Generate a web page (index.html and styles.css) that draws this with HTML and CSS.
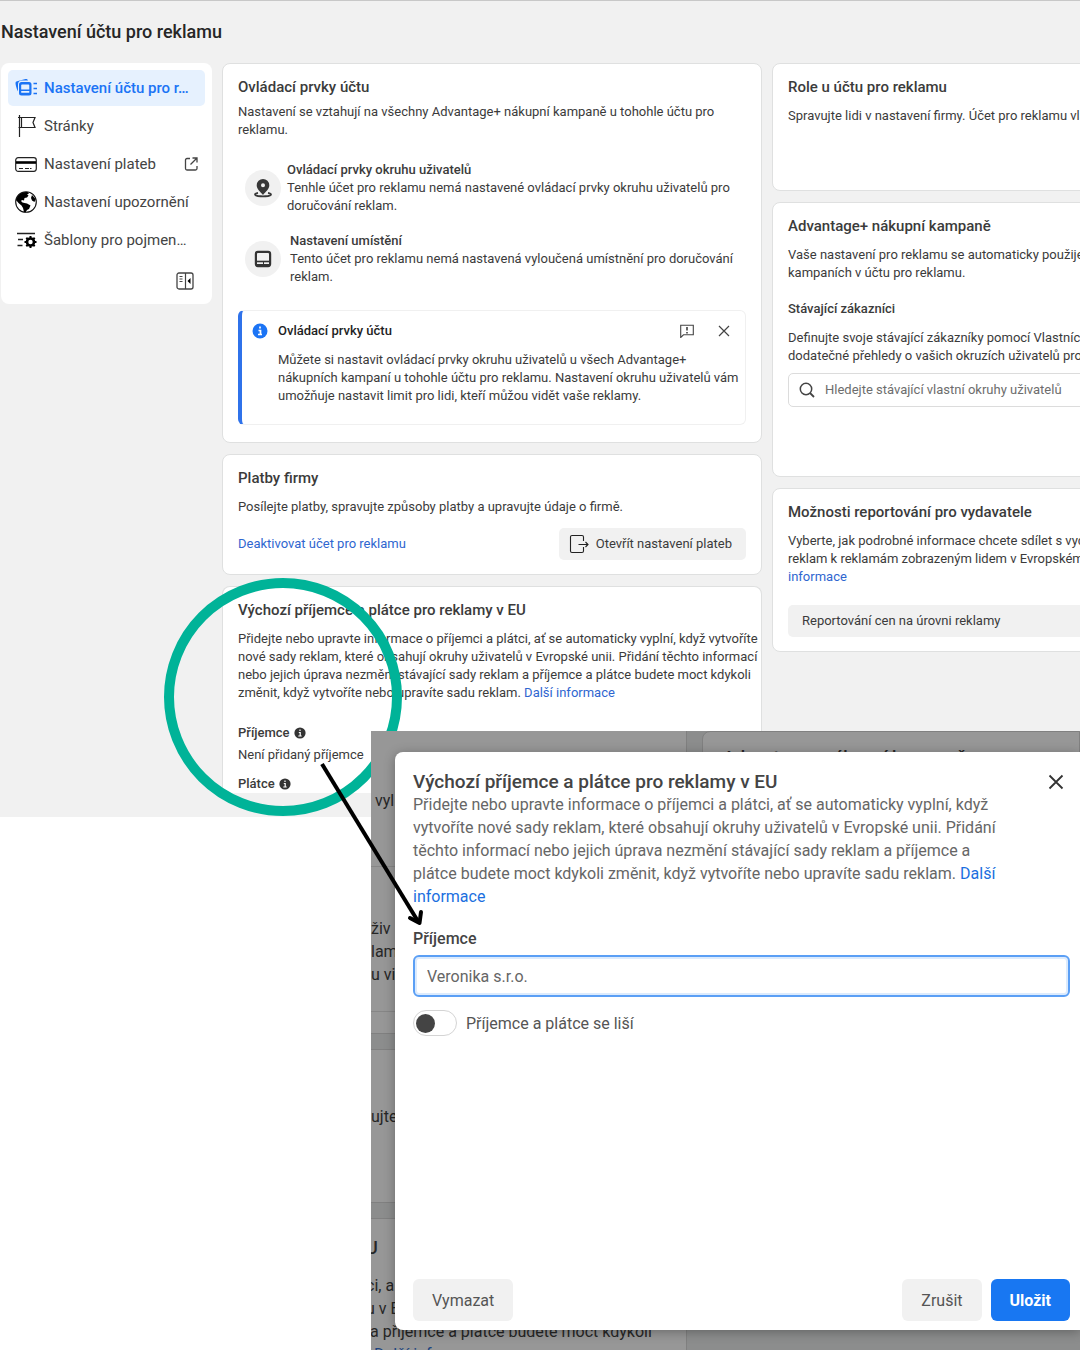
FILE: index.html
```html
<!DOCTYPE html>
<html lang="cs">
<head>
<meta charset="utf-8">
<meta name="viewport" content="width=device-width, initial-scale=1">
<title>Nastavení účtu pro reklamu</title>
<link rel="stylesheet" href="styles.css">
</head>
<body>
<div class="collage">
  <div class="page">
    <header class="page-header"><h1>Nastavení účtu pro reklamu</h1></header>
    <div class="columns">
      <nav class="sidebar">
        <a class="nav-item active" href="#ucet">
          <svg class="nav-icon" viewBox="0 0 22 22"><path d="M3 14.500C1.300 11 .5 7.500.5 6c0-1 .7-1.600 1.600-1.800L10.500 2c1-.2 2 .2 2.500 1.500H7C4.500 3.500 3 5 3 7.500z" fill="#1b74f5"/><path d="M6.500 5H14a2.500 2.500 0 0 1 2.500 2.500V16a2.500 2.500 0 0 1-2.500 2.500H6.500A2.500 2.500 0 0 1 4 16V7.500A2.500 2.500 0 0 1 6.500 5zM7 7.500q-.8 0-.8.8V12.500h8.100V8.300q0-.8-.8-.8zM6.200 14v1.200q0 .6.6.6h6.900q.6 0 .6-.6V14z" fill="#1b74f5" fill-rule="evenodd"/><path d="M18.500 6.500H22M18.500 11.500H22M18.500 16.500H22" stroke="#1b74f5" stroke-width="1.600"/></svg>
          <span>Nastavení účtu pro r…</span>
        </a>
        <a class="nav-item" href="#stranky">
          <svg class="nav-icon" viewBox="0 0 22 22"><path d="M4.500 0v22M3 2.500h17l-2 5 2 5H3.500M6.500 2.500v10" fill="none" stroke="#222" stroke-width="1.200"/></svg>
          <span>Stránky</span>
        </a>
        <a class="nav-item" href="#platby">
          <svg class="nav-icon" viewBox="0 0 22 22"><rect x=".7" y="4.700" width="20.600" height="13.600" rx="2.500" fill="none" stroke="#222" stroke-width="1.200"/><path d="M1 9.500h20" stroke="#000" stroke-width="2.600"/><path d="M4 15.500h4M10 15.500h4M15 15.500h1.500" stroke="#222"/></svg>
          <span>Nastavení plateb</span>
          <svg class="nav-external" viewBox="0 0 14 14"><path d="M6 1.500H3A1.500 1.500 0 0 0 1.500 3v8.500A1.500 1.500 0 0 0 3 13h8.500a1.500 1.500 0 0 0 1.500-1.500V9M8.500 1H13v4.500M13 1L6.500 7.500" fill="none" stroke="#444" stroke-width="1.300"/></svg>
        </a>
        <a class="nav-item" href="#upozorneni">
          <svg class="nav-icon" viewBox="0 0 22 22"><circle cx="11" cy="11" r="10.300" fill="#fff" stroke="#111" stroke-width="1.100"/><path d="M2.500 5.500C4.500 2 8.500.500 12.500 1l1.500 1.500-2 1 1.500 1-1.500 2-2.500.5-.500 2.500-2-.5-1 1 1.500 1.500 2 .5 2.500.5 3.500 2-1.500 3.500-2 1-1.500 2.500-1.500-.5-1-4-1.500-2.500-3-2.500-2.500-3zM17 4l3.500 4-1 3-2.500-1.500-1-2.500z"/></svg>
          <span>Nastavení upozornění</span>
        </a>
        <a class="nav-item" href="#sablony">
          <svg class="nav-icon" viewBox="0 0 22 22"><path d="M2 4.500h18M3 10.500h5M2.500 16.500h5" stroke="#222" stroke-width="1.300"/><circle cx="15.500" cy="13" r="3.500" fill="none" stroke="#000" stroke-width="2.600"/><path d="M15.500 7v2.500M15.500 16.500V19M9.500 13H12M19 13h2.500M11.300 8.800L13 10.500M18 15.500l1.700 1.700M19.700 8.800L18 10.500M13 15.500l-1.700 1.700" stroke="#000" stroke-width="2"/></svg>
          <span>Šablony pro pojmen…</span>
        </a>
        <button class="collapse" type="button" aria-label="Sbalit nabídku">
          <svg width="18" height="18" viewBox="0 0 18 18"><rect x="1" y="1" width="16" height="16" rx="2" fill="none" stroke="#444" stroke-width="1.300"/><path d="M9.500 1v16M3.500 4.500h3M3.500 7h3M3.500 9.500h3" stroke="#444" stroke-width="1.200"/><path d="M14.500 6v6l-3-3z"/></svg>
        </button>
      </nav>

      <main class="column">
        <section class="card">
          <h2>Ovládací prvky účtu</h2>
          <p class="tight">Nastavení se vztahují na všechny Advantage+ nákupní kampaně u tohohle účtu pro reklamu.</p>
          <div class="controls">
            <div class="control">
              <span class="bubble"><svg width="20" height="20" viewBox="0 0 20 20"><path d="M10 1a6.300 6.300 0 0 1 6.300 6.300c0 4-3.800 6.500-6.300 9.700-2.500-3.200-6.300-5.700-6.300-9.700A6.300 6.300 0 0 1 10 1zm0 4.300A2 2 0 1 0 10 9.300 2 2 0 0 0 10 5.300z" fill="#383838" fill-rule="evenodd"/><path d="M5 14.800c-4 .8-4 2.400 0 3.200 3 .5 7 .5 10 0 4-.8 4-2.400 0-3.200" fill="none" stroke="#383838" stroke-width="1.800"/></svg></span>
              <div><h3>Ovládací prvky okruhu uživatelů</h3><p>Tenhle účet pro reklamu nemá nastavené ovládací prvky okruhu uživatelů pro doručování reklam.</p></div>
            </div>
            <div class="control wide">
              <span class="bubble"><svg width="20" height="20" viewBox="0 0 20 20"><rect x="2.900" y="2.900" width="14.200" height="14.200" rx="2" fill="none" stroke="#333" stroke-width="2.200"/><path d="M3 12.500h14" stroke="#333" stroke-width="1.600"/><path d="M3 16h14" stroke="#333" stroke-width="2"/><path d="M10.500 12v5" stroke="#333"/></svg></span>
              <div><h3>Nastavení umístění</h3><p>Tento účet pro reklamu nemá nastavená vyloučená umístnění pro doručování reklam.</p></div>
            </div>
          </div>
          <aside class="notice">
            <svg class="notice-icon" viewBox="0 0 16 16"><circle cx="8" cy="8" r="7.500" fill="#1b74f5"/><path d="M8 3.500v2M6.500 7.500h2v4M6 11.500h4" fill="none" stroke="#fff" stroke-width="1.700"/></svg>
            <div class="notice-body">
              <div class="notice-head">
                <h3>Ovládací prvky účtu</h3>
                <button type="button" aria-label="Zpětná vazba"><svg width="14" height="14" viewBox="0 0 14 14"><path d="M.7 13.500V1.200h12.600v9.600H3.500z" fill="none" stroke="#444" stroke-width="1.100"/><path d="M7 3v3.500M7 8v1.500" stroke="#333" stroke-width="1.500"/></svg></button>
                <button type="button" aria-label="Zavřít"><svg width="12" height="12" viewBox="0 0 12 12"><path d="M1 1l10 10M11 1L1 11" stroke="#444" stroke-width="1.200"/></svg></button>
              </div>
              <p class="line">Můžete si nastavit ovládací prvky okruhu uživatelů u všech Advantage+<br>nákupních kampaní u tohohle účtu pro reklamu. Nastavení okruhu uživatelů vám<br>umožňuje nastavit limit pro lidi, kteří můžou vidět vaše reklamy.</p>
            </div>
          </aside>
        </section>

        <section class="card">
          <h2>Platby firmy</h2>
          <p>Posílejte platby, spravujte způsoby platby a upravujte údaje o firmě.</p>
          <div class="actions">
            <a href="#deaktivovat">Deaktivovat účet pro reklamu</a>
            <button class="button" type="button"><svg width="20" height="20" viewBox="0 0 20 20"><path d="M14.500 7V3A1.500 1.500 0 0 0 13 1.500H3A1.500 1.500 0 0 0 1.500 3v14A1.500 1.500 0 0 0 3 18.500h10a1.500 1.500 0 0 0 1.500-1.500v-4M9.500 10.500H19M16.500 8l2.500 2.500-2.500 2.500" fill="none" stroke="#222" stroke-width="1.100"/></svg>Otevřít nastavení plateb</button>
          </div>
        </section>

        <section class="card cut">
          <h2>Výchozí příjemce a plátce pro reklamy v EU</h2>
          <p class="line">Přidejte nebo upravte informace o příjemci a plátci, ať se automaticky vyplní, když vytvoříte<br>nové sady reklam, které obsahují okruhy uživatelů v Evropské unii. Přidání těchto informací<br>nebo jejich úprava nezmění stávající sady reklam a příjemce a plátce budete moct kdykoli<br>změnit, když vytvoříte nebo upravíte sadu reklam. <a href="#dalsi">Další informace</a></p>
          <dl class="parties">
            <dt>Příjemce <svg width="12" height="12" viewBox="0 0 12 12"><circle cx="6" cy="6" r="5.600" fill="#333"/><path d="M6 2.500V4M4.800 5.500h1.400V9M4.300 9h3.400" fill="none" stroke="#fff" stroke-width="1.200"/></svg></dt>
            <dd>Není přidaný příjemce</dd>
            <dt>Plátce <svg width="12" height="12" viewBox="0 0 12 12"><circle cx="6" cy="6" r="5.600" fill="#333"/><path d="M6 2.500V4M4.800 5.500h1.400V9M4.300 9h3.400" fill="none" stroke="#fff" stroke-width="1.200"/></svg></dt>
          </dl>
        </section>
      </main>

      <div class="column">
        <section class="card roles">
          <h2>Role u účtu pro reklamu</h2>
          <p class="line">Spravujte lidi v nastavení firmy. Účet pro reklamu vlas</p>
        </section>
        <section class="card advantage">
          <h2>Advantage+ nákupní kampaně</h2>
          <p class="line">Vaše nastavení pro reklamu se automaticky použije v<br>kampaních v účtu pro reklamu.</p>
          <h3>Stávající zákazníci</h3>
          <p class="line">Definujte svoje stávající zákazníky pomocí Vlastních<br>dodatečné přehledy o vašich okruzích uživatelů pro A</p>
          <label class="search">
            <svg width="16" height="16" viewBox="0 0 16 16"><circle cx="7" cy="7" r="5.700" fill="none" stroke="#444" stroke-width="1.500"/><path d="M11 11l4 4" stroke="#444" stroke-width="1.800"/></svg>
            <input type="search" placeholder="Hledejte stávající vlastní okruhy uživatelů" aria-label="Hledejte stávající vlastní okruhy uživatelů">
          </label>
        </section>
        <section class="card">
          <h2>Možnosti reportování pro vydavatele</h2>
          <p class="line">Vyberte, jak podrobné informace chcete sdílet s vyda<br>reklam k reklamám zobrazeným lidem v Evropském<br><a href="#informace">informace</a></p>
          <button class="button block" type="button">Reportování cen na úrovni reklamy</button>
        </section>
      </div>
    </div>
  </div>

  <div class="ring"></div>

  <div class="overlay">
    <div class="backdrop" aria-hidden="true">
      <div class="back-column">
        <div class="back-card first"><p>&nbsp;vyl</p><div class="back-notice"><p>živ</p><p>lam</p><p>u vi</p></div></div>
        <div class="back-card second"><p>ujte</p></div>
        <div class="back-card third"><h4>U</h4><p>ci, a</p><p>u v E</p><p>&nbsp;a příjemce a plátce budete moct kdykoli</p><p class="blue">&nbsp;&nbsp;Další inf</p></div>
      </div>
      <div class="back-card side"><h4>Advantage+ nákupní kampaně</h4></div>
    </div>
    <form class="dialog" role="dialog" aria-labelledby="dialog-title">
      <div class="dialog-head">
        <h2 id="dialog-title">Výchozí příjemce a plátce pro reklamy v EU</h2>
        <button class="close" type="button" aria-label="Zavřít"><svg width="16" height="16" viewBox="0 0 16 16"><path d="M1.500 1.500l13 13M14.500 1.500l-13 13" stroke="#333" stroke-width="1.800"/></svg></button>
      </div>
      <p class="dialog-text">Přidejte nebo upravte informace o příjemci a plátci, ať se automaticky vyplní, když vytvoříte nové sady reklam, které obsahují okruhy uživatelů v Evropské unii. Přidání těchto informací nebo jejich úprava nezmění stávající sady reklam a příjemce a plátce budete moct kdykoli změnit, když vytvoříte nebo upravíte sadu reklam. <a href="#dalsi">Další informace</a></p>
      <label class="field-label" for="payee">Příjemce</label>
      <input class="field" id="payee" type="text" value="Veronika s.r.o.">
      <label class="switch"><input type="checkbox">Příjemce a plátce se liší</label>
      <div class="dialog-actions">
        <button class="dialog-button" type="button">Vymazat</button>
        <div class="dialog-confirm">
          <button class="dialog-button" type="button">Zrušit</button>
          <button class="dialog-button primary" type="submit">Uložit</button>
        </div>
      </div>
    </form>
  </div>

  <svg class="arrow" width="120" height="180" viewBox="0 0 120 180" aria-hidden="true"><path d="M12 14L109 173" fill="none" stroke="#000" stroke-width="4"/><path d="M100 168l9.500 5 1.500-11" fill="none" stroke="#000" stroke-width="4" stroke-linecap="round" stroke-linejoin="round"/></svg>
</div>
</body>
</html>
```
FILE: styles.css
```css
* { box-sizing: border-box; }

body {
  margin: 0;
  background: #fff;
  color: #3b3b3b;
  font: 13px/18px Roboto, "Liberation Sans", sans-serif;
}

h1, h2, h3, h4, p, dl, dd { margin: 0; }
button, input { font: inherit; color: inherit; }
button { padding: 0; border: 0; background: none; }
svg { display: block; flex: none; }
a { color: #2f66d0; text-decoration: none; }

.collage {
  position: relative;
  min-height: 100vh;
  overflow: hidden;
}

/* Settings page */
.page {
  padding: 0 0 24px 1px;
  border-top: 1px solid #c8c8c8;
  background: #f1f1f1;
}

.page-header {
  display: flex;
  align-items: center;
  height: 62px;
}

h1 {
  color: #262626;
  font-size: 18px;
  font-weight: 500;
  line-height: 24px;
}

.columns {
  display: grid;
  grid-template-columns: 211px repeat(2, minmax(540px, 1fr));
  align-items: start;
  gap: 10px;
}

.sidebar {
  display: flex;
  flex-direction: column;
  gap: 2px;
  padding: 7px;
  border-radius: 8px;
  background: #fff;
}

.nav-item {
  display: flex;
  align-items: center;
  gap: 7px;
  height: 36px;
  padding: 0 7px;
  border-radius: 5px;
  color: #444;
  font-size: 15px;
  white-space: nowrap;
}

.nav-item.active {
  background: #e6f1fe;
  color: #1b74f5;
  font-weight: 500;
}

.nav-icon { width: 22px; height: 22px; }
.nav-external { width: 14px; height: 14px; margin-left: auto; }

.collapse {
  align-self: flex-end;
  padding: 12px 11px 7px;
}

.column {
  display: flex;
  flex-direction: column;
  gap: 11px;
}

.card {
  padding: 13px 15px 14px;
  border: 1px solid #dfe0e0;
  border-radius: 8px;
  background: #fff;
}

.card.cut {
  padding-bottom: 0;
  border-bottom: 0;
  border-radius: 8px 8px 0 0;
}

.roles { min-height: 128px; }
.advantage { min-height: 275px; }

h2 {
  font-size: 15px;
  font-weight: 500;
  line-height: 20px;
}

h3 {
  font-size: 13px;
  font-weight: 500;
  line-height: 18px;
}

.card > h2 + p { margin-top: 10px; }
.card > h2 + p.tight { margin-top: 6px; }
.advantage > h3 { margin: 18px 0 11px; }
.line { white-space: nowrap; }

.controls {
  display: flex;
  flex-direction: column;
  gap: 17px;
  margin: 22px 0 24px;
  padding-left: 7px;
}

.control {
  display: flex;
  align-items: center;
  gap: 6px;
}

.control.wide { gap: 9px; }

.bubble {
  display: grid;
  flex: none;
  place-items: center;
  width: 36px;
  height: 36px;
  border-radius: 50%;
  background: #f1f1f1;
}

.notice {
  display: flex;
  gap: 10px;
  margin-bottom: 3px;
  padding: 11px 15px 19px 10px;
  border: 1px solid #f0f0f0;
  border-left: 4px solid #2f72ea;
  border-radius: 6px;
}

.notice-icon { width: 16px; height: 16px; margin-top: 1px; }
.notice-body { flex: 1; min-width: 0; }

.notice-head {
  display: flex;
  align-items: center;
  gap: 24px;
  margin-bottom: 11px;
  color: #1f1f1f;
}

.notice-head h3 { flex: 1; }

.actions {
  display: flex;
  align-items: center;
  justify-content: space-between;
  margin-top: 12px;
}

.button {
  display: flex;
  align-items: center;
  gap: 7px;
  height: 32px;
  padding: 0 14px 0 10px;
  border-radius: 5px;
  background: #f1f1f1;
}

.button.block {
  width: 100%;
  margin-top: 19px;
  padding: 0 14px;
}

.parties { margin-top: 22px; }

.parties dt {
  display: flex;
  align-items: center;
  gap: 4px;
  font-weight: 500;
}

.parties dd { margin: 4px 0 11px; }

.search {
  display: flex;
  align-items: center;
  gap: 10px;
  height: 34px;
  margin-top: 8px;
  padding: 0 10px;
  border: 1px solid #dcdcdc;
  border-radius: 5px;
}

.search input {
  flex: 1;
  min-width: 0;
  padding: 0;
  border: 0;
  outline: 0;
  background: none;
}

.search input::placeholder { color: #6d6d6d; opacity: 1; }

/* Annotations */
.ring {
  position: absolute;
  top: 578px;
  left: 164px;
  width: 238px;
  height: 238px;
  border: 10px solid #00b398;
  border-radius: 50%;
}

.arrow {
  position: absolute;
  top: 750px;
  left: 310px;
}

/* Dialog over the dimmed page */
.overlay {
  position: absolute;
  top: 731px;
  right: 0;
  bottom: 0;
  left: 371px;
  overflow: hidden;
  background: #8c8d8d;
  font-size: 16px;
  line-height: 23px;
}

.backdrop {
  display: flex;
  gap: 15px;
  height: 100%;
  color: #262626;
  white-space: nowrap;
}

.back-column {
  display: flex;
  flex: none;
  flex-direction: column;
  gap: 15px;
  width: 316px;
}

.back-card {
  flex: none;
  border: 1px solid #808080;
  border-left: 0;
  background: #979797;
}

.back-card h4 { font-size: 18px; font-weight: 500; line-height: 23px; }

.back-card.first { height: 303px; padding-top: 58px; border-top: 0; }
.back-notice { height: 146px; margin-top: 54px; padding-top: 50px; border: solid #868686; border-width: 1px 0; }
.back-card.second { height: 154px; padding-top: 55px; }
.back-card.third { padding-top: 17px; border-bottom: 0; }
.back-card.third > * { margin-left: -5px; }
.back-card.third h4 { margin-bottom: 15px; }
.blue { color: #1d4580; }

.back-card.side {
  flex: 1;
  align-self: flex-start;
  height: 400px;
  padding: 14px 20px;
  border-left: 1px solid #808080;
  border-radius: 8px 0 0 0;
}

.dialog {
  position: absolute;
  top: 21px;
  right: 0;
  bottom: 20px;
  left: 24px;
  display: flex;
  flex-direction: column;
  padding: 18px 10px 9px 18px;
  border-radius: 8px 0 0 8px;
  background: #fff;
  color: #666;
  box-shadow: 0 2px 12px rgba(0, 0, 0, .3);
}

.dialog-head {
  display: flex;
  align-items: center;
  justify-content: space-between;
  padding-right: 6px;
  color: #444;
}

.dialog-head h2 { font-size: 19px; line-height: 23px; }
.dialog-text { max-width: 600px; }
.dialog a { color: #1b6fe0; }

.field-label {
  margin-top: 19px;
  color: #444;
  font-weight: 500;
}

.field {
  width: 100%;
  height: 42px;
  margin-top: 5px;
  padding: 0 12px;
  border: 2px solid #5b9ff5;
  border-radius: 6px;
  outline: 0;
  background: #fff;
  box-shadow: inset 0 0 0 2px #dcebfd;
}

.switch {
  display: flex;
  align-items: center;
  gap: 9px;
  margin-top: 13px;
  color: #555;
}

.switch input {
  display: flex;
  align-items: center;
  width: 44px;
  height: 26px;
  margin: 0;
  padding: 0 2px;
  border: 1px solid #d4d4d4;
  border-radius: 13px;
  background: #fff;
  appearance: none;
}

.switch input::before {
  width: 19px;
  height: 19px;
  border-radius: 50%;
  background: #444;
  content: "";
}

.switch input:checked { justify-content: flex-end; }

.dialog-actions, .dialog-confirm { display: flex; gap: 9px; }

.dialog-actions {
  justify-content: space-between;
  margin-top: auto;
}

.dialog-button {
  height: 42px;
  padding: 0 19px;
  border-radius: 6px;
  background: #f1f1f1;
  color: #555;
}

.dialog-button.primary {
  background: #1877f2;
  color: #fff;
  font-weight: 700;
}
```
